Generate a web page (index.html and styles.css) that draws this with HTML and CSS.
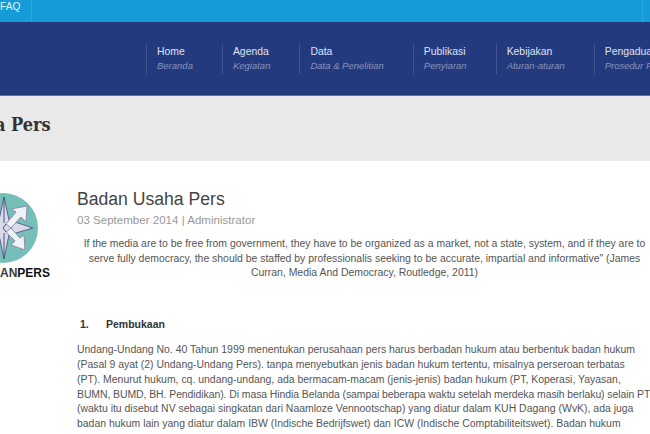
FILE: index.html
```html
<!DOCTYPE html>
<html lang="en">
<head>
  <meta charset="UTF-8">
  <title>Badan Usaha Pers</title>
  <link rel="stylesheet" href="styles.css">
</head>
<body>
  <!-- Top utility bar -->
  <div class="topbar">
    <a class="top-link" href="#">FAQ</a>
    <span class="top-end"></span>
  </div>

  <!-- Main navigation -->
  <nav class="mainnav">
    <a class="nav-item" href="#"><span class="nav-main">Home</span><span class="nav-sub">Beranda</span></a>
    <a class="nav-item" href="#"><span class="nav-main">Agenda</span><span class="nav-sub">Kegiatan</span></a>
    <a class="nav-item" href="#"><span class="nav-main">Data</span><span class="nav-sub">Data &amp; Penelitian</span></a>
    <a class="nav-item" href="#"><span class="nav-main">Publikasi</span><span class="nav-sub">Penyiaran</span></a>
    <a class="nav-item" href="#"><span class="nav-main">Kebijakan</span><span class="nav-sub">Aturan-aturan</span></a>
    <a class="nav-item" href="#"><span class="nav-main">Pengaduan</span><span class="nav-sub">Prosedur Pengaduan</span></a>
  </nav>

  <!-- Page title band -->
  <div class="title-band">
    <h2>Badan Usaha Pers</h2>
  </div>

  <div class="content">
    <!-- Sidebar logo -->
    <aside class="sidebar">
      <svg class="logo" width="50" height="72" viewBox="0 0 50 72">
        <circle cx="3" cy="35" r="35" fill="#74c0b8"/>
        <!-- thin four point star -->
        <path d="M4 4 L9 27 L33 35 L9 42 L4 66 L-1 42 L-20 35 L-1 27 Z" fill="#d9dbe8" stroke="#5b5f8e" stroke-width="1"/>
        <!-- fat arrows going up and down to the right -->
        <path d="M6 31 L16 19 L11 16 L27 13 L26 29 L21 24 L11 35 Z" fill="#f1f2f6" stroke="#8b8ea8" stroke-width="1"/>
        <path d="M6 39 L15 48 L11 52 L25 57 L24 42 L20 45 L11 35 Z" fill="#f1f2f6" stroke="#8b8ea8" stroke-width="1"/>
        <path d="M3 35 L6 31 M3 35 L6 39 M4 4 L4 30 M4 40 L4 66" fill="none" stroke="#4d5080" stroke-width="1"/>
      </svg>
      <div class="logo-text"><span class="logo-an">AN</span>PERS</div>
    </aside>

    <main class="article">
      <h1>Badan Usaha Pers</h1>
      <p class="meta">03 September 2014 | Administrator</p>
      <p class="quote">If the media are to be free from government, they have to be organized as a market, not a state, system, and if they are to serve fully democracy, the should be staffed by professionalis seeking to be accurate, impartial and informative" (James Curran, Media And Democracy, Routledge, 2011)</p>

      <div class="section-head"><span class="num">1.</span>Pembukaan</div>

      <p class="body-text">Undang-Undang No. 40 Tahun 1999 menentukan perusahaan pers harus berbadan hukum atau berbentuk badan hukum<br>
      (Pasal 9 ayat (2) Undang-Undang Pers). tanpa menyebutkan jenis badan hukum tertentu, misalnya perseroan terbatas<br>
      (PT). Menurut hukum, cq. undang-undang, ada bermacam-macam (jenis-jenis) badan hukum (PT, Koperasi, Yayasan,<br>
      <span class="tight">BUMN, BUMD, BH. Pendidikan). Di masa Hindia Belanda (sampai beberapa waktu setelah merdeka masih berlaku) selain PT</span><br>
      (waktu itu disebut NV sebagai singkatan dari Naamloze Vennootschap) yang diatur dalam KUH Dagang (WvK), ada juga<br>
      badan hukum lain yang diatur dalam IBW (Indische Bedrijfswet) dan ICW (Indische Comptabiliteitswet). Badan hukum</p>
    </main>
  </div>
</body>
</html>
```

FILE: styles.css
```css
* {
  box-sizing: border-box;
  margin: 0;
  padding: 0;
}
html, body {
  height: 434px;
  overflow: hidden;
}
body {
  font-family: "Liberation Sans", Arial, sans-serif;
  background-color: #fff;
  color: #444;
}

/* Top bar */
.topbar {
  display: flex;
  justify-content: space-between;
  height: 22px;
  padding-right: 7px;
  background-color: #169bd9;
}
.top-link {
  width: 32px;
  padding-top: 1px;
  border-right: 1px solid #2ba6df;
  color: #e4f3fb;
  font-size: 10.2px;
  line-height: 12px;
  text-decoration: none;
}
.top-end {
  border-left: 1px solid #2ba6df;
}

/* Main nav */
.mainnav {
  display: flex;
  height: 74px;
  padding: 22px 0 0 146px;
  overflow: hidden;
  background-color: #243a7f;
  border-bottom: 1px solid #5f71a8;
}
.nav-item {
  flex: none;
  height: 30px;
  padding: 0 29px 0 10px;
  border-left: 1px solid #41558f;
  text-decoration: none;
}
.nav-main {
  display: block;
  color: #dfe3f0;
  font-size: 10.4px;
  line-height: 15px;
}
.nav-sub {
  display: block;
  color: #8794bd;
  font-size: 9.5px;
  font-style: italic;
  line-height: 14px;
}

/* Title band */
.title-band {
  height: 65px;
  padding-top: 17px;
  overflow: hidden;
  background-color: #e9e9e9;
}
.title-band h2 {
  margin-left: -114px;
  color: #333;
  font-family: "DejaVu Serif Condensed", "DejaVu Serif", serif;
  font-size: 18px;
  line-height: 24px;
  white-space: nowrap;
}

/* Content */
.content {
  display: flex;
  padding-top: 27px;
}
.sidebar {
  flex: none;
  width: 77px;
  padding-top: 5px;
}
.logo {
  display: block;
}
.logo-text {
  width: 50px;
  margin-top: 1px;
  color: #111;
  font-size: 12px;
  font-weight: bold;
  line-height: 14px;
  text-align: right;
  white-space: nowrap;
}
.logo-an {
  color: #3a3a3a;
}
.article {
  width: 570px;
}
.article h1 {
  color: #444;
  font-size: 17.6px;
  font-weight: normal;
  line-height: 22px;
}
.meta {
  margin-top: 2px;
  color: #999;
  font-size: 11.55px;
  line-height: 16px;
}
.quote {
  margin: 9px -5px 0 0;
  color: #555;
  font-size: 10.45px;
  line-height: 14.7px;
  text-align: center;
}
.section-head {
  margin: 36px 0 0 3px;
  color: #333;
  font-size: 10.5px;
  font-weight: bold;
  line-height: 14px;
}
.num {
  display: inline-block;
  width: 26px;
}
.body-text {
  margin-top: 12px;
  color: #555;
  font-size: 10.45px;
  line-height: 14.8px;
  white-space: nowrap;
}
.tight {
  letter-spacing: -0.07px;
}
```
